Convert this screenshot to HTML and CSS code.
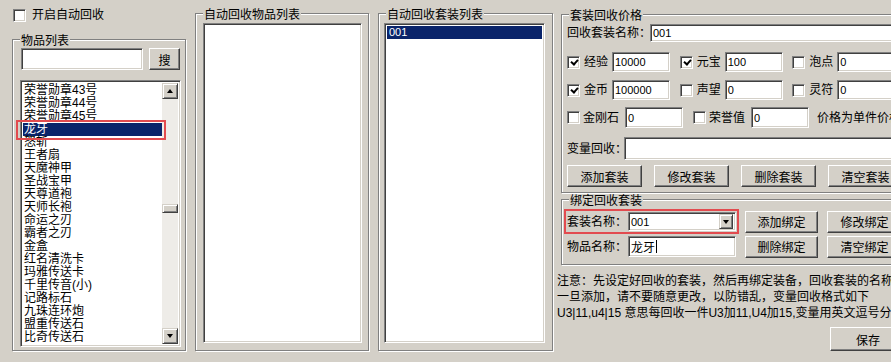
FILE: index.html
```html
<!DOCTYPE html>
<html lang="zh-CN">
<head>
    <meta charset="UTF-8">
    <title>自动回收</title>
    <link rel="stylesheet" href="styles.css">
</head>
<body>
    <div class="window">
        <div class="col col-items">
            <label class="check-line"><span class="chk"></span>开启自动回收</label>
            <div class="group group-items">
                <span class="group-title">物品列表</span>
                <div class="search-row">
                    <div class="field sunken search-field"></div>
                    <button type="button" class="btn search-btn">搜</button>
                </div>
                <div class="listbox sunken item-list">
                    <ul class="items">
                        <li>荣誉勋章43号</li>
                        <li>荣誉勋章44号</li>
                        <li>荣誉勋章45号</li>
                        <li class="selected">龙牙</li>
                        <li>怒斩</li>
                        <li>王者扇</li>
                        <li>天魔神甲</li>
                        <li>圣战宝甲</li>
                        <li>天尊道袍</li>
                        <li>天师长袍</li>
                        <li>命运之刃</li>
                        <li>霸者之刃</li>
                        <li>金盒</li>
                        <li>红名清洗卡</li>
                        <li>玛雅传送卡</li>
                        <li>千里传音(小)</li>
                        <li>记路标石</li>
                        <li>九珠连环炮</li>
                        <li>盟重传送石</li>
                        <li>比奇传送石</li>
                    </ul>
                    <div class="scrollbar">
                        <span class="sb-btn up"></span>
                        <span class="sb-track"><span class="sb-thumb"></span></span>
                        <span class="sb-btn down"></span>
                    </div>
                </div>
            </div>
        </div>

        <div class="group group-list group-auto">
            <span class="group-title">自动回收物品列表</span>
            <div class="listbox sunken">
                <ul class="items"></ul>
            </div>
        </div>

        <div class="group group-list group-sets">
            <span class="group-title">自动回收套装列表</span>
            <div class="listbox sunken">
                <ul class="items">
                    <li class="selected num">001</li>
                </ul>
            </div>
        </div>

        <div class="col col-prices">
            <div class="group group-price">
                <span class="group-title">套装回收价格</span>
                <div class="row row-name">
                    <span class="lbl lbl-name">回收套装名称：</span>
                    <div class="field sunken field-long">001</div>
                </div>
                <div class="row row-cells">
                    <div class="cell"><span class="chk on"></span><span class="lbl lbl-2">经验</span><div class="field sunken field-num">10000</div></div>
                    <div class="cell"><span class="chk on"></span><span class="lbl lbl-2">元宝</span><div class="field sunken field-num">100</div></div>
                    <div class="cell"><span class="chk"></span><span class="lbl lbl-2">泡点</span><div class="field sunken field-num">0</div></div>
                </div>
                <div class="row row-cells row-second">
                    <div class="cell"><span class="chk on"></span><span class="lbl lbl-2">金币</span><div class="field sunken field-num">100000</div></div>
                    <div class="cell"><span class="chk"></span><span class="lbl lbl-2">声望</span><div class="field sunken field-num">0</div></div>
                    <div class="cell"><span class="chk"></span><span class="lbl lbl-2">灵符</span><div class="field sunken field-num">0</div></div>
                </div>
                <div class="row row-cells row-third">
                    <div class="cell cell-wide"><span class="chk"></span><span class="lbl lbl-3">金刚石</span><div class="field sunken field-num">0</div></div>
                    <div class="cell cell-wide"><span class="chk"></span><span class="lbl lbl-3">荣誉值</span><div class="field sunken field-num">0</div></div>
                    <span class="lbl">价格为单件价格</span>
                </div>
                <div class="row row-var">
                    <span class="lbl lbl-var">变量回收：</span>
                    <div class="field sunken field-var"></div>
                </div>
                <div class="row row-btns">
                    <button type="button" class="btn">添加套装</button>
                    <button type="button" class="btn">修改套装</button>
                    <button type="button" class="btn">删除套装</button>
                    <button type="button" class="btn">清空套装</button>
                </div>
            </div>

            <div class="group group-bind">
                <span class="group-title">绑定回收套装</span>
                <div class="row row-bind">
                    <div class="marked">
                        <span class="lbl lbl-bind">套装名称：</span>
                        <div class="combo sunken"><span class="combo-text">001</span><span class="combo-btn"></span></div>
                    </div>
                    <button type="button" class="btn bind-btn">添加绑定</button>
                    <button type="button" class="btn">修改绑定</button>
                </div>
                <div class="row row-bind row-bind2">
                    <span class="lbl lbl-bind">物品名称：</span>
                    <div class="field sunken field-item">龙牙<span class="caret"></span></div>
                    <button type="button" class="btn bind-btn">删除绑定</button>
                    <button type="button" class="btn">清空绑定</button>
                </div>
            </div>

            <div class="notes">
                <p>注意：先设定好回收的套装，然后再绑定装备，回收套装的名称</p>
                <p>一旦添加，请不要随意更改，以防错乱，变量回收格式如下</p>
                <p>U3|11,u4|15 意思每回收一件U3加11,U4加15,变量用英文逗号分</p>
            </div>

            <button type="button" class="btn save-btn">保存</button>
        </div>
    </div>
</body>
</html>
```

FILE: styles.css
```css
* {
    margin: 0;
    padding: 0;
    box-sizing: border-box;
}
body {
    width: 891px;
    height: 362px;
    overflow: hidden;
    background: #d4d0c8;
    font-family: "Liberation Sans", "Noto Sans CJK SC", sans-serif;
    font-size: 12px;
    color: #000;
}
.window {
    display: flex;
    align-items: flex-start;
    padding-left: 12px;
    height: 362px;
}
.col,
.group {
    flex-shrink: 0;
}

/* classic etched group box */
.group {
    position: relative;
    display: flex;
    flex-direction: column;
    border: 1px solid #808080;
    box-shadow: inset 1px 1px 0 #fff, 1px 1px 0 #fff;
}
.group-title {
    position: absolute;
    top: -6px;
    left: 7px;
    padding: 0 1px;
    line-height: 14px;
    background: #d4d0c8;
    white-space: nowrap;
}

/* sunken fields and raised buttons */
.sunken {
    background: #fff;
    border: 1px solid;
    border-color: #808080 #fff #fff #808080;
    box-shadow: inset 1px 1px 0 #404040, inset -1px -1px 0 #d4d0c8;
}
.btn {
    display: flex;
    align-items: center;
    justify-content: center;
    flex-shrink: 0;
    width: 75px;
    height: 22px;
    background: #d4d0c8;
    border: 1px solid;
    border-color: #fff #404040 #404040 #fff;
    box-shadow: inset -1px -1px 0 #808080;
    font: inherit;
    color: #000;
}
.field {
    display: flex;
    align-items: center;
    flex-shrink: 0;
    padding-left: 2px;
    font-size: 11px;
    white-space: nowrap;
}
.chk {
    position: relative;
    flex-shrink: 0;
    width: 13px;
    height: 13px;
    background: #fff;
    border: 1px solid;
    border-color: #808080 #fff #fff #808080;
    box-shadow: inset 1px 1px 0 #404040, inset -1px -1px 0 #d4d0c8;
}
.chk.on::after {
    content: '';
    position: absolute;
    left: 3px;
    top: 2px;
    width: 5px;
    height: 3px;
    border-left: 2px solid #000;
    border-bottom: 2px solid #000;
    transform: rotate(-48deg);
}
.lbl {
    flex-shrink: 0;
    white-space: nowrap;
    line-height: 14px;
}

/* left column */
.col-items {
    width: 174px;
    display: flex;
    flex-direction: column;
}
.check-line {
    display: flex;
    align-items: center;
    gap: 6px;
    height: 14px;
    margin: 8px 0 0 1px;
    line-height: 14px;
}
.group-items {
    height: 312px;
    margin-top: 17px;
    padding: 8px 4px 8px 7px;
}
.search-row {
    display: flex;
    gap: 6px;
    height: 22px;
}
.search-field {
    width: 122px;
    height: 22px;
    margin-left: 1px;
}
.search-btn {
    width: 31px;
}

/* list boxes */
.listbox {
    position: relative;
    display: flex;
    flex: 1;
    padding: 2px;
}
.items {
    flex: 1;
    list-style: none;
    overflow: hidden;
}
.items li {
    height: 13px;
    line-height: 13px;
    padding-left: 1px;
    white-space: nowrap;
}
.items li.selected {
    background: #0a246a;
    color: #fff;
}
.items li.num {
    font-size: 11px;
    padding-left: 2px;
}
.item-list {
    margin-top: 10px;
}
.item-list .items {
    padding-top: 1px;
}
.item-list::after {
    content: '';
    position: absolute;
    left: -5px;
    top: 39px;
    width: 146px;
    height: 16px;
    border: 2px solid #e24b4f;
}
.scrollbar {
    display: flex;
    flex-direction: column;
    width: 16px;
}
.sb-btn {
    position: relative;
    height: 16px;
    background: #d4d0c8;
    border: 1px solid;
    border-color: #d4d0c8 #404040 #404040 #d4d0c8;
    box-shadow: inset 1px 1px 0 #fff, inset -1px -1px 0 #808080;
}
.sb-btn::after {
    content: '';
    position: absolute;
    left: 4px;
    border-left: 3.5px solid transparent;
    border-right: 3.5px solid transparent;
}
.sb-btn.up::after {
    top: 5px;
    border-bottom: 4px solid #000;
}
.sb-btn.down::after {
    top: 5px;
    border-top: 4px solid #000;
}
.sb-track {
    flex: 1;
    background: #eeece8;
}
.sb-thumb {
    display: block;
    height: 9px;
    margin-top: 105px;
    background: #d4d0c8;
    border: 1px solid;
    border-color: #d4d0c8 #404040 #404040 #d4d0c8;
    box-shadow: inset 1px 1px 0 #fff, inset -1px -1px 0 #808080;
}

/* middle lists */
.group-list {
    height: 338px;
    margin-top: 13px;
    margin-left: 9px;
    padding: 9px 6px 7px 7px;
}
.group-auto {
    width: 174px;
}
.group-sets {
    width: 175px;
    padding-left: 5px;
    padding-right: 7px;
}

/* right column */
.col-prices {
    width: 360px;
    margin-left: 2px;
    display: flex;
    flex-direction: column;
}
.group-price {
    width: 345px;
    height: 179px;
    margin: 14px 0 0 6px;
    padding: 9px 0 0 5px;
}
.row {
    display: flex;
    align-items: center;
}
.row-name {
    height: 18px;
}
.lbl-name {
    width: 83px;
}
.field-long {
    width: 260px;
    height: 18px;
}
.row-cells {
    height: 20px;
    margin-top: 10px;
}
.row-second {
    margin-top: 8px;
}
.row-third {
    height: 21px;
    margin-top: 7px;
}
.cell {
    display: flex;
    align-items: center;
    width: 114px;
    height: 100%;
}
.cell .chk {
    margin-right: 4px;
}
.lbl-2 {
    width: 28px;
}
.field-num {
    width: 58px;
    height: 100%;
}
.cell-wide {
    width: 126px;
}
.cell-wide + .cell-wide {
    width: 124px;
}
.cell-wide .chk {
    margin-right: 3px;
}
.lbl-3 {
    width: 42px;
}
.row-var {
    height: 23px;
    margin-top: 9px;
}
.lbl-var {
    width: 57px;
}
.field-var {
    width: 290px;
    height: 23px;
}
.row-btns {
    height: 22px;
    margin-top: 5px;
    gap: 12px;
}

.group-bind {
    width: 345px;
    height: 66px;
    margin: 6px 0 0 6px;
    padding: 11px 0 0 5px;
}
.row-bind {
    height: 21px;
    gap: 9px;
}
.row-bind2 {
    margin-top: 4px;
}
.marked {
    display: flex;
    align-items: center;
    outline: 2px solid #e24b4f;
    outline-offset: 1px;
}
.row-bind2 .lbl-bind,
.marked .lbl-bind {
    width: 61px;
}
.row-bind2 .lbl-bind {
    margin-right: -9px;
}
.bind-btn {
    width: 73px;
}
.combo {
    display: flex;
    align-items: center;
    width: 108px;
    height: 19px;
    padding: 2px;
    font-size: 11px;
}
.combo-text {
    flex: 1;
}
.combo-btn {
    position: relative;
    width: 14px;
    height: 15px;
    background: #d4d0c8;
    border: 1px solid;
    border-color: #d4d0c8 #404040 #404040 #d4d0c8;
    box-shadow: inset 1px 1px 0 #fff, inset -1px -1px 0 #808080;
}
.combo-btn::after {
    content: '';
    position: absolute;
    left: 3px;
    top: 5px;
    border-left: 3.5px solid transparent;
    border-right: 3.5px solid transparent;
    border-top: 4px solid #000;
}
.field-item {
    width: 108px;
    height: 21px;
    font-size: 12px;
}
.caret {
    display: inline-block;
    width: 1px;
    height: 13px;
    margin-left: 1px;
    background: #000;
}

.notes {
    margin-top: 8px;
    padding-left: 2px;
    line-height: 16px;
    white-space: nowrap;
}
.save-btn {
    width: 76px;
    height: 24px;
    margin: 6px 0 0 275px;
}
```
